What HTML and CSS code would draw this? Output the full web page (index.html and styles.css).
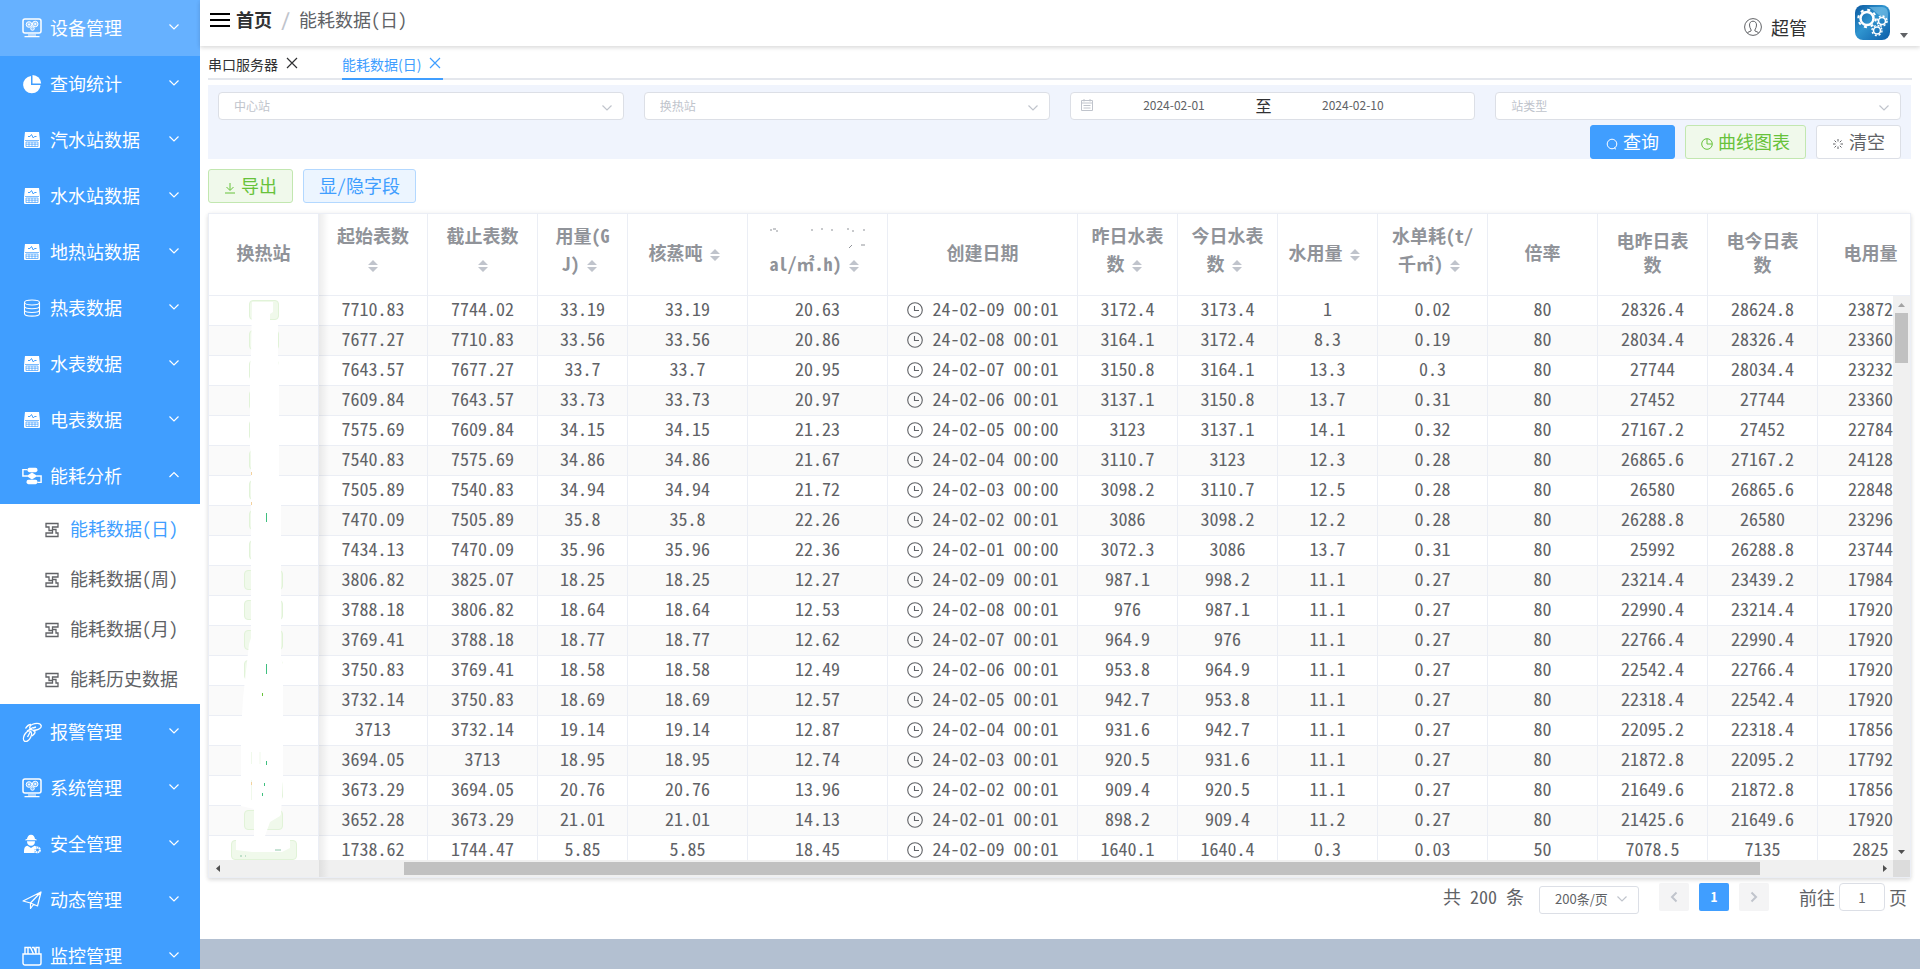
FILE: index.html
```html
<!DOCTYPE html>
<html lang="zh-CN">
<head>
<meta charset="utf-8">
<title>能耗数据(日)</title>
<link rel="stylesheet" href="styles.css">
</head>
<body>
<svg class="sprite" aria-hidden="true">
  <symbol id="i-monitor" viewBox="0 0 20 20"><rect x="1" y="1" width="18" height="14" rx="2" fill="none" stroke="currentColor" stroke-width="1.500"/><g fill="currentColor" fill-opacity=".35" stroke="currentColor"><circle cx="7" cy="6.500" r="2.800"/><circle cx="13.200" cy="6" r="2.800"/><circle cx="10.500" cy="10.500" r="1.800"/></g><circle cx="7" cy="6.500" r="1" fill="currentColor"/><circle cx="13.200" cy="6" r="1" fill="currentColor"/><path d="M6 16.500h8v1H6zM2.500 18h15v1.200h-15z" fill="currentColor"/></symbol>
  <symbol id="i-pie" viewBox="0 0 20 20"><path d="M9 2v9h9.500A8.700 8.700 0 1 1 9 2z" fill="currentColor"/><path d="M10.500 1a8.800 8.800 0 0 1 8.700 8.600h-8.700z" fill="currentColor"/></symbol>
  <symbol id="i-meter" viewBox="0 0 20 20"><path d="M3 2h14l1 9v6a1 1 0 0 1-1 1H3a1 1 0 0 1-1-1v-6z" fill="currentColor"/><path d="M6 6.500h2l1.500-2 1.800 3.500 1.200-1.500h2" fill="none" stroke="#409eff" stroke-width="1"/><path d="M3 10.500h14M4 12h12v4.500H4zM4 14.200h12M7 12v4.500M10 12v4.500M13 12v4.500" fill="none" stroke="#409eff" stroke-width=".7"/></symbol>
  <symbol id="i-db" viewBox="0 0 20 20"><g fill="none" stroke="currentColor" stroke-width="1.100"><ellipse cx="10" cy="4.500" rx="7.500" ry="2.500"/><path d="M2.500 4.500v11c0 3.500 15 3.500 15 0v-11M2.500 8.200c0 3.300 15 3.300 15 0M2.500 12c0 3.300 15 3.300 15 0"/></g></symbol>
  <symbol id="i-flow" viewBox="0 0 22 20"><g fill="currentColor"><rect x="6" y="1" width="11" height="4.800" rx="2"/><path d="M11 6.200l6 3.800-6 3.800L5 10z"/><rect x="5" y="14.200" width="12" height="4.800" rx="2"/></g><path d="M6 3H1v7h5M16 10h5v7h-4" fill="none" stroke="currentColor" stroke-width="1.600"/></symbol>
  <symbol id="i-zig" viewBox="0 0 14 16"><path d="M1 1.500h12v3.500H7.500v2.500H11V11h2v3.500H1V11h6.500V8.500H4V5H1z" fill="none" stroke="currentColor" stroke-width="1.300"/></symbol>
  <symbol id="i-alarm" viewBox="0 0 20 20"><g fill="none" stroke="currentColor" stroke-width="1.400"><ellipse cx="13.500" cy="4.800" rx="5.800" ry="3.300" transform="rotate(-12 13.500 4.800)"/><ellipse cx="5.500" cy="14.200" rx="5.800" ry="3.300" transform="rotate(-62 5.500 14.200)"/><path d="M3.500 6.500C5 4 7 2.500 9 2.500M5 9l6-3.500M8.500 9.500L5.500 15M11 9c2-.5 2.500 1 1.500 2.500L10 14M11 6l3-1"/></g></symbol>
  <symbol id="i-guard" viewBox="0 0 20 20"><g fill="currentColor"><path d="M3 6.300c0-.8 2-1.300 2-1.300C5.500 2.500 6.500.8 9 .8S12.500 2.500 13 5c0 0 2 .5 2 1.300z"/><path d="M5 7.200h8c0 2.800-1.500 4.600-4 4.600S5 10 5 7.200z"/><path d="M2 19c0-5 .5-6.500 3.500-7.300L9 14l3.500-2.300 2.500 1-2.800 3 .6 3.300z"/></g><circle cx="15.500" cy="16" r="2.400" fill="none" stroke="currentColor" stroke-width="2" stroke-dasharray="1.500 .385"/></symbol>
  <symbol id="i-plane" viewBox="0 0 20 20"><path d="M1 11L19 2l-3.500 14-7-3zM19 2L8.500 13v5.500l3-4" fill="none" stroke="currentColor" stroke-width="1.200" stroke-linejoin="round"/></symbol>
  <symbol id="i-box" viewBox="0 0 20 20"><g fill="none" stroke="currentColor" stroke-width="1.400"><path d="M1 8h18v9a2 2 0 0 1-2 2H3a2 2 0 0 1-2-2z"/><path d="M3 8V1.500h3V8M6.500 1.500h2L11.500 8M10 1.500h2L14 7M14 8V1.500h3V8"/></g></symbol>
  <symbol id="i-down" viewBox="0 0 12 8"><path d="M1.500 1.500L6 6l4.500-4.500" fill="none" stroke="currentColor" stroke-width="1.200"/></symbol>
  <symbol id="i-up" viewBox="0 0 12 8"><path d="M1.500 6L6 1.500 10.500 6" fill="none" stroke="currentColor" stroke-width="1.200"/></symbol>
  <symbol id="i-close" viewBox="0 0 12 12"><path d="M1 1l10 10M11 1L1 11" stroke="currentColor" stroke-width="1.200"/></symbol>
  <symbol id="i-clock" viewBox="0 0 16 16"><circle cx="8" cy="8" r="7.300" fill="none" stroke="currentColor" stroke-width="1.100"/><path d="M7.500 4v4.500H12" fill="none" stroke="currentColor" stroke-width="1.100"/></symbol>
  <symbol id="i-sort" viewBox="0 0 10 12"><path d="M5 0l5 5H0zM5 12l5-5H0z" fill="currentColor"/></symbol>
</svg>
<div class="app">
  <nav class="side">
    <button class="item on"><svg><use href="#i-monitor"/></svg><span>设备管理</span><svg class="arr"><use href="#i-down"/></svg></button>
    <button class="item"><svg><use href="#i-pie"/></svg><span>查询统计</span><svg class="arr"><use href="#i-down"/></svg></button>
    <button class="item"><svg><use href="#i-meter"/></svg><span>汽水站数据</span><svg class="arr"><use href="#i-down"/></svg></button>
    <button class="item"><svg><use href="#i-meter"/></svg><span>水水站数据</span><svg class="arr"><use href="#i-down"/></svg></button>
    <button class="item"><svg><use href="#i-meter"/></svg><span>地热站数据</span><svg class="arr"><use href="#i-down"/></svg></button>
    <button class="item"><svg><use href="#i-db"/></svg><span>热表数据</span><svg class="arr"><use href="#i-down"/></svg></button>
    <button class="item"><svg><use href="#i-meter"/></svg><span>水表数据</span><svg class="arr"><use href="#i-down"/></svg></button>
    <button class="item"><svg><use href="#i-meter"/></svg><span>电表数据</span><svg class="arr"><use href="#i-down"/></svg></button>
    <button class="item"><svg><use href="#i-flow"/></svg><span>能耗分析</span><svg class="arr"><use href="#i-up"/></svg></button>
    <div class="sub">
      <a class="on" href="#"><svg><use href="#i-zig"/></svg>能耗数据(日)</a>
      <a href="#"><svg><use href="#i-zig"/></svg>能耗数据(周)</a>
      <a href="#"><svg><use href="#i-zig"/></svg>能耗数据(月)</a>
      <a href="#"><svg><use href="#i-zig"/></svg>能耗历史数据</a>
    </div>
    <button class="item"><svg><use href="#i-alarm"/></svg><span>报警管理</span><svg class="arr"><use href="#i-down"/></svg></button>
    <button class="item"><svg><use href="#i-monitor"/></svg><span>系统管理</span><svg class="arr"><use href="#i-down"/></svg></button>
    <button class="item"><svg><use href="#i-guard"/></svg><span>安全管理</span><svg class="arr"><use href="#i-down"/></svg></button>
    <button class="item"><svg><use href="#i-plane"/></svg><span>动态管理</span><svg class="arr"><use href="#i-down"/></svg></button>
    <button class="item"><svg><use href="#i-box"/></svg><span>监控管理</span><svg class="arr"><use href="#i-down"/></svg></button>
  </nav>
  <div class="page">
    <header class="top">
      <button class="burger" aria-label="菜单"><i></i><i></i><i></i></button>
      <div class="crumb"><a href="#">首页</a><span class="sep">/</span><span>能耗数据(日)</span></div>
      <div class="user">
        <svg class="face" viewBox="0 0 18 18"><circle cx="9" cy="9" r="8.400"/><path d="M3.500 14.500l3.500-1.500c1-1-1.500-2.500-1.500-6C5.500 4.500 7 3.200 9 3.200s3.500 1.300 3.500 3.800c0 3.500-2.500 5-1.500 6l3.500 1.500"/></svg>
        <span>超管</span>
      </div>
      <button class="logo" aria-label="用户菜单">
        <svg class="gears" viewBox="0 0 35 35"><defs><linearGradient id="lg" x1="0" y1="0" x2="1" y2="1"><stop offset="0" stop-color="#0a58a0"/><stop offset=".45" stop-color="#2f94cf"/><stop offset="1" stop-color="#0b5ca8"/></linearGradient></defs><rect width="35" height="35" rx="8" fill="url(#lg)"/><path d="M14 2h13q6 0 6 7v9Q22 8 14 2z" fill="#8fd0f0" opacity=".5"/><g fill="none" stroke="#fff"><circle cx="12" cy="13.500" r="6.500" stroke-width="2.500"/><circle cx="12" cy="13.500" r="8.700" stroke-width="2" stroke-dasharray="3 3.830"/><circle cx="27" cy="16" r="3.500" stroke-width="1.600"/><circle cx="27" cy="16" r="5" stroke-width="1.400" stroke-dasharray="2 1.930"/><circle cx="22" cy="25.500" r="3.500" stroke-width="1.600"/><circle cx="22" cy="25.500" r="5" stroke-width="1.400" stroke-dasharray="2 1.930"/></g></svg>
        <svg class="caret" viewBox="0 0 8 5"><path d="M0 0h8L4 5z"/></svg>
      </button>
    </header>
    <div class="tabs">
      <div class="tab"><a href="#">串口服务器</a><button aria-label="关闭"><svg><use href="#i-close"/></svg></button></div>
      <div class="tab on"><a href="#">能耗数据(日)</a><button aria-label="关闭"><svg><use href="#i-close"/></svg></button></div>
    </div>
    <main class="main">
      <form class="search">
        <div class="fields">
          <div class="sel"><select aria-label="中心站"><option>中心站</option></select><svg><use href="#i-down"/></svg></div>
          <div class="sel"><select aria-label="换热站"><option>换热站</option></select><svg><use href="#i-down"/></svg></div>
          <div class="range">
            <svg viewBox="0 0 12 12"><path d="M.5 1.500h11v10H.5zM.5 4h11M3 0v2.500M9 0v2.500M2.500 6.500h7M2.500 9h7" fill="none" stroke="currentColor"/></svg>
            <input type="text" value="2024-02-01" aria-label="开始日期"><span>至</span><input type="text" value="2024-02-10" aria-label="结束日期">
          </div>
          <div class="sel"><select aria-label="站类型"><option>站类型</option></select><svg><use href="#i-down"/></svg></div>
        </div>
        <div class="acts">
          <button type="button" class="btn primary"><svg viewBox="0 0 12 12"><circle cx="6" cy="6" r="4.800"/><path d="M8 9.500l2 1.800"/></svg>查询</button>
          <button type="button" class="btn green"><svg viewBox="0 0 12 12"><circle cx="6" cy="6" r="5.300"/><path d="M6 1v5h5"/></svg>曲线图表</button>
          <button type="button" class="btn"><svg viewBox="0 0 12 12"><path d="M6 1v2.500M6 8.500V11M1 6h2.500M8.500 6H11M2.500 2.500l1.700 1.700M7.800 7.800l1.700 1.700M9.500 2.500L7.800 4.200M4.200 7.800L2.500 9.500"/></svg>清空</button>
        </div>
      </form>
      <div class="tools">
        <button class="btn green"><svg viewBox="0 0 12 12"><path d="M6 1v7M2.500 5L6 8.500 9.500 5M1 11h10"/></svg>导出</button>
        <button class="btn blue">显/隐字段</button>
      </div>
      <div class="grid">
        <div class="head">
          <table><colgroup><col class="w110"><col class="w109"><col class="w110"><col class="w90"><col class="w120"><col class="w140"><col class="w190"><col class="w100"><col class="w100"><col class="w100"><col class="w110"><col class="w110"><col class="w110"><col class="w110"><col class="w106"></colgroup>
          <thead><tr>
            <th>换热站</th>
            <th class="s two">起始表数<br><svg><use href="#i-sort"/></svg></th>
            <th class="s two">截止表数<br><svg><use href="#i-sort"/></svg></th>
            <th class="s two">用量(G<br>J)<svg><use href="#i-sort"/></svg></th>
            <th class="s">核蒸吨<svg><use href="#i-sort"/></svg></th>
            <th class="s two"><svg class="trace" viewBox="0 0 96 28"><path d="M0 9h2M3 8h3M6 10h2M41 9h2M51 8h2M61 9h2M77 8h2M82 10h2M93 9h2M79 27l3-3M91 24h4" stroke="#909399"/></svg><br>al/㎡.h)<svg><use href="#i-sort"/></svg></th>
            <th>创建日期</th>
            <th class="s two">昨日水表<br>数<svg><use href="#i-sort"/></svg></th>
            <th class="s two">今日水表<br>数<svg><use href="#i-sort"/></svg></th>
            <th class="s">水用量<svg><use href="#i-sort"/></svg></th>
            <th class="s two">水单耗(t/<br>千㎡)<svg><use href="#i-sort"/></svg></th>
            <th>倍率</th>
            <th>电昨日表<br>数</th>
            <th>电今日表<br>数</th>
            <th>电用量</th>
          </tr></thead></table>
        </div>
        <div class="mid">
          <div class="body">
            <table><colgroup><col class="w110"><col class="w109"><col class="w110"><col class="w90"><col class="w120"><col class="w140"><col class="w190"><col class="w100"><col class="w100"><col class="w100"><col class="w110"><col class="w110"><col class="w110"><col class="w110"><col class="w106"></colgroup>
            <tbody>
<tr><td><i class="tag s"></i></td><td>7710.83</td><td>7744.02</td><td>33.19</td><td>33.19</td><td>20.63</td><td><svg><use href="#i-clock"/></svg>24-02-09 00:01</td><td>3172.4</td><td>3173.4</td><td>1</td><td>0.02</td><td>80</td><td>28326.4</td><td>28624.8</td><td>23872</td></tr>
<tr><td><i class="tag s"></i></td><td>7677.27</td><td>7710.83</td><td>33.56</td><td>33.56</td><td>20.86</td><td><svg><use href="#i-clock"/></svg>24-02-08 00:01</td><td>3164.1</td><td>3172.4</td><td>8.3</td><td>0.19</td><td>80</td><td>28034.4</td><td>28326.4</td><td>23360</td></tr>
<tr><td><i class="tag s"></i></td><td>7643.57</td><td>7677.27</td><td>33.7</td><td>33.7</td><td>20.95</td><td><svg><use href="#i-clock"/></svg>24-02-07 00:01</td><td>3150.8</td><td>3164.1</td><td>13.3</td><td>0.3</td><td>80</td><td>27744</td><td>28034.4</td><td>23232</td></tr>
<tr><td><i class="tag s"></i></td><td>7609.84</td><td>7643.57</td><td>33.73</td><td>33.73</td><td>20.97</td><td><svg><use href="#i-clock"/></svg>24-02-06 00:01</td><td>3137.1</td><td>3150.8</td><td>13.7</td><td>0.31</td><td>80</td><td>27452</td><td>27744</td><td>23360</td></tr>
<tr><td><i class="tag s"></i></td><td>7575.69</td><td>7609.84</td><td>34.15</td><td>34.15</td><td>21.23</td><td><svg><use href="#i-clock"/></svg>24-02-05 00:00</td><td>3123</td><td>3137.1</td><td>14.1</td><td>0.32</td><td>80</td><td>27167.2</td><td>27452</td><td>22784</td></tr>
<tr><td><i class="tag s"></i></td><td>7540.83</td><td>7575.69</td><td>34.86</td><td>34.86</td><td>21.67</td><td><svg><use href="#i-clock"/></svg>24-02-04 00:00</td><td>3110.7</td><td>3123</td><td>12.3</td><td>0.28</td><td>80</td><td>26865.6</td><td>27167.2</td><td>24128</td></tr>
<tr><td><i class="tag s"></i></td><td>7505.89</td><td>7540.83</td><td>34.94</td><td>34.94</td><td>21.72</td><td><svg><use href="#i-clock"/></svg>24-02-03 00:00</td><td>3098.2</td><td>3110.7</td><td>12.5</td><td>0.28</td><td>80</td><td>26580</td><td>26865.6</td><td>22848</td></tr>
<tr><td><i class="tag s"></i></td><td>7470.09</td><td>7505.89</td><td>35.8</td><td>35.8</td><td>22.26</td><td><svg><use href="#i-clock"/></svg>24-02-02 00:01</td><td>3086</td><td>3098.2</td><td>12.2</td><td>0.28</td><td>80</td><td>26288.8</td><td>26580</td><td>23296</td></tr>
<tr><td><i class="tag s"></i></td><td>7434.13</td><td>7470.09</td><td>35.96</td><td>35.96</td><td>22.36</td><td><svg><use href="#i-clock"/></svg>24-02-01 00:00</td><td>3072.3</td><td>3086</td><td>13.7</td><td>0.31</td><td>80</td><td>25992</td><td>26288.8</td><td>23744</td></tr>
<tr><td><i class="tag m"></i></td><td>3806.82</td><td>3825.07</td><td>18.25</td><td>18.25</td><td>12.27</td><td><svg><use href="#i-clock"/></svg>24-02-09 00:01</td><td>987.1</td><td>998.2</td><td>11.1</td><td>0.27</td><td>80</td><td>23214.4</td><td>23439.2</td><td>17984</td></tr>
<tr><td><i class="tag m"></i></td><td>3788.18</td><td>3806.82</td><td>18.64</td><td>18.64</td><td>12.53</td><td><svg><use href="#i-clock"/></svg>24-02-08 00:01</td><td>976</td><td>987.1</td><td>11.1</td><td>0.27</td><td>80</td><td>22990.4</td><td>23214.4</td><td>17920</td></tr>
<tr><td><i class="tag m"></i></td><td>3769.41</td><td>3788.18</td><td>18.77</td><td>18.77</td><td>12.62</td><td><svg><use href="#i-clock"/></svg>24-02-07 00:01</td><td>964.9</td><td>976</td><td>11.1</td><td>0.27</td><td>80</td><td>22766.4</td><td>22990.4</td><td>17920</td></tr>
<tr><td><i class="tag m"></i></td><td>3750.83</td><td>3769.41</td><td>18.58</td><td>18.58</td><td>12.49</td><td><svg><use href="#i-clock"/></svg>24-02-06 00:01</td><td>953.8</td><td>964.9</td><td>11.1</td><td>0.27</td><td>80</td><td>22542.4</td><td>22766.4</td><td>17920</td></tr>
<tr><td><i class="tag m"></i></td><td>3732.14</td><td>3750.83</td><td>18.69</td><td>18.69</td><td>12.57</td><td><svg><use href="#i-clock"/></svg>24-02-05 00:01</td><td>942.7</td><td>953.8</td><td>11.1</td><td>0.27</td><td>80</td><td>22318.4</td><td>22542.4</td><td>17920</td></tr>
<tr><td><i class="tag m"></i></td><td>3713</td><td>3732.14</td><td>19.14</td><td>19.14</td><td>12.87</td><td><svg><use href="#i-clock"/></svg>24-02-04 00:01</td><td>931.6</td><td>942.7</td><td>11.1</td><td>0.27</td><td>80</td><td>22095.2</td><td>22318.4</td><td>17856</td></tr>
<tr><td><i class="tag m"></i></td><td>3694.05</td><td>3713</td><td>18.95</td><td>18.95</td><td>12.74</td><td><svg><use href="#i-clock"/></svg>24-02-03 00:01</td><td>920.5</td><td>931.6</td><td>11.1</td><td>0.27</td><td>80</td><td>21872.8</td><td>22095.2</td><td>17792</td></tr>
<tr><td><i class="tag m"></i></td><td>3673.29</td><td>3694.05</td><td>20.76</td><td>20.76</td><td>13.96</td><td><svg><use href="#i-clock"/></svg>24-02-02 00:01</td><td>909.4</td><td>920.5</td><td>11.1</td><td>0.27</td><td>80</td><td>21649.6</td><td>21872.8</td><td>17856</td></tr>
<tr><td><i class="tag m"></i></td><td>3652.28</td><td>3673.29</td><td>21.01</td><td>21.01</td><td>14.13</td><td><svg><use href="#i-clock"/></svg>24-02-01 00:01</td><td>898.2</td><td>909.4</td><td>11.2</td><td>0.27</td><td>80</td><td>21425.6</td><td>21649.6</td><td>17920</td></tr>
<tr><td><i class="tag l"></i></td><td>1738.62</td><td>1744.47</td><td>5.85</td><td>5.85</td><td>18.45</td><td><svg><use href="#i-clock"/></svg>24-02-09 00:01</td><td>1640.1</td><td>1640.4</td><td>0.3</td><td>0.03</td><td>50</td><td>7078.5</td><td>7135</td><td>2825</td></tr>
            </tbody></table>
            <svg class="smear" viewBox="0 0 110 564"><path fill="#fff" d="M43 6h21v10l-3 2v6h8v40l1 5v115h2v179l2 5v115l-2 35-1 2-10 6-5 14h25v12l-8 4H43l-16-2v-12h18v-29l-13-3v-73l2-35 6-54 2-6V160l-1-10V70l1-10z"/><g stroke-width="1"><path d="M57.500 217v9M57.500 368v10M57.500 465v4M55.500 487v3M53.500 497v3" stroke="#3fbf7f"/><path d="M53.500 397v3" stroke="#67c23a"/><path d="M42.500 456v12M51 456v12M42.500 484v20" stroke="#f0f9eb"/><path d="M66 554h6M31 560h2M36 560h1" stroke="#8fc7a8"/><path d="M42.500 176v3M42.500 206v3M42.500 486v3" stroke="#f3d19e"/></g></svg>
          </div>
          <div class="vbar"><svg viewBox="0 0 17 17"><path d="M5 11h7L8.500 7z" fill="#a3a3a3"/></svg><div class="vtrack"><i></i></div><svg viewBox="0 0 17 17"><path d="M5 7h7l-3.500 4z" fill="#505050"/></svg></div>
        </div>
        <div class="hbar"><svg viewBox="0 0 17 17"><path d="M11 5v7L7 8.500z" fill="#505050"/></svg><div class="htrack"><b></b><i></i><b></b></div><svg viewBox="0 0 17 17"><path d="M7 5v7l4-3.500z" fill="#505050"/></svg><div class="corner"></div></div>
        <div class="fixshade"></div>
      </div>
      <div class="pager">
        <span class="total">共 200 条</span>
        <div class="sel size"><select aria-label="每页条数"><option>200条/页</option></select><svg><use href="#i-down"/></svg></div>
        <button class="pg" aria-label="上一页"><svg viewBox="0 0 8 12"><path d="M6.500 1.500L2 6l4.500 4.500"/></svg></button>
        <button class="pg on">1</button>
        <button class="pg" aria-label="下一页"><svg viewBox="0 0 8 12"><path d="M1.500 1.500L6 6l-4.500 4.500"/></svg></button>
        <label class="jump">前往<input type="text" value="1">页</label>
      </div>
    </main>
    <footer class="foot"></footer>
  </div>
</div>
</body>
</html>
```
FILE: styles.css
```css
* { box-sizing: border-box; }
body {
  margin: 0;
  font-family: "Noto Sans CJK SC", sans-serif;
  font-size: 18px;
  font-feature-settings: "hwid";
  color: #606266;
  background: #fff;
}
button, input, select { font: inherit; font-feature-settings: inherit; color: inherit; margin: 0; }
button { cursor: pointer; }
a { color: inherit; text-decoration: none; }
.sprite { display: none; }
.app { display: flex; height: 100vh; overflow: hidden; }

.side { width: 200px; flex: none; background: #409eff; overflow: hidden; }
.item {
  display: flex; align-items: center; gap: 8px;
  width: 100%; height: 56px; padding: 0 20px 0 22px;
  border: 0; background: none; color: #fff; text-align: left;
}
.item.on { background: #66b1ff; }
.item svg { width: 20px; height: 20px; }
.item span { flex: 1; padding-bottom: 2px; }
.item .arr { width: 12px; height: 8px; margin-bottom: 2px; }
.sub { background: #fff; }
.sub a { display: flex; align-items: center; gap: 11px; height: 50px; padding: 0 0 2px 45px; white-space: nowrap; }
.sub svg { width: 14px; height: 16px; color: #606266; margin-top: 3px; }
.sub .on { color: #409eff; }

.page { flex: 1; min-width: 0; display: flex; flex-direction: column; }
.top {
  display: flex; align-items: center; height: 46px; flex: none; padding: 0 10px;
  box-shadow: 0 2px 4px rgba(0,0,0,.12), 0 0 6px rgba(0,0,0,.04);
}
.burger { display: flex; flex-direction: column; gap: 4px; width: 20px; padding: 0; margin-bottom: 6px; border: 0; background: none; }
.burger i { height: 2px; width: 20px; background: #000; }
.crumb { display: flex; margin: 0 auto 9px 6px; }
.crumb a { font-weight: 700; color: #303133; }
.sep { margin: 0 9px; color: #c0c4cc; font-weight: 700; }
.user { display: flex; align-items: center; gap: 9px; margin-right: 48px; padding-top: 7px; color: #303133; }
.face { width: 18px; height: 18px; fill: none; stroke: #606266; margin-top: 1px; }
.logo { display: flex; align-items: flex-end; gap: 10px; padding: 0 0 1px; border: 0; background: none; margin-right: 2px; }
.gears { width: 35px; height: 35px; }
.caret { width: 8px; height: 5px; fill: #606266; margin-bottom: 2px; }

.tabs { display: flex; gap: 42px; flex: none; height: 34px; margin: 0 8px; border-bottom: 2px solid #e4e7ed; font-size: 14px; font-feature-settings: normal; color: #303133; }
.tab { display: flex; align-items: center; gap: 8px; height: 34px; padding: 4px 2px 0 0; border-bottom: 2px solid transparent; }
.tab.on { color: #409eff; border-color: #409eff; }
.tab button { display: flex; padding: 0 0 2px; border: 0; background: none; }
.tab svg { width: 12px; height: 12px; }

.main { flex: 1; min-height: 0; display: flex; flex-direction: column; padding: 5px 9px 0 8px; }
.search { flex: none; background: #f0f4fd; padding: 7px 10px 0; }
.fields { display: grid; grid-template-columns: repeat(4, 1fr); gap: 20px; font-size: 12px; font-feature-settings: normal; }
.sel { position: relative; }
.sel select {
  appearance: none; width: 100%; height: 28px; padding: 0 15px 2px;
  border: 1px solid #dcdfe6; border-radius: 4px; background: #fff; color: #c0c4cc; font-size: 12px;
}
.sel svg { position: absolute; right: 11px; top: 12px; width: 12px; height: 8px; color: #c0c4cc; pointer-events: none; }
.range { display: flex; align-items: center; height: 28px; padding: 0 10px 3px; border: 1px solid #dcdfe6; border-radius: 4px; background: #fff; }
.range svg { width: 12px; height: 12px; color: #c0c4cc; }
.range input { flex: 1; min-width: 0; padding: 0; border: 0; text-align: center; background: none; }
.range input:last-child { margin-right: 30px; }
.range span { font-size: 16px; color: #303133; }
.acts { display: flex; justify-content: flex-end; gap: 10px; margin-top: 5px; }
.tools { display: flex; gap: 10px; margin: 10px 0; flex: none; }
.btn {
  display: flex; align-items: center; gap: 5px; height: 34px; padding: 0 15px 3px;
  border: 1px solid #dcdfe6; border-radius: 3px; background: #fff; line-height: 28px;
}
.btn svg { width: 12px; height: 12px; fill: none; stroke: currentColor; stroke-width: 1; margin-top: 6px; }
.btn.primary { color: #fff; background: #409eff; border-color: #409eff; }
.btn.green { color: #67c23a; background: #f0f9eb; border-color: #c2e7b0; }
.btn.blue { color: #409eff; background: #ecf5ff; border-color: #b3d8ff; }

.grid {
  position: relative; flex: 1; min-height: 0; display: flex; flex-direction: column;
  border: 1px solid #ebeef5;
  box-shadow: 0 2px 4px rgba(0,0,0,.12), 0 0 6px rgba(0,0,0,.04);
}
.grid table { table-layout: fixed; width: 1715px; border-collapse: separate; border-spacing: 0; }
.w90 { width: 90px; } .w100 { width: 100px; } .w106 { width: 106px; } .w109 { width: 109px; } .w110 { width: 110px; }
.w120 { width: 120px; } .w140 { width: 140px; } .w190 { width: 190px; }
.grid th, .grid td { padding: 0; text-align: center; white-space: nowrap; border-right: 1px solid #ebeef5; border-bottom: 1px solid #ebeef5; }
.head { overflow: hidden; flex: none; }
.grid th { height: 82px; padding-bottom: 5px; color: #909399; line-height: 24px; }
.grid th.s { line-height: 28px; }
.grid th.two { padding-bottom: 12px; }
.grid th svg { width: 10px; height: 12px; margin: 0 7px; color: #c0c4cc; vertical-align: -1px; }
.grid th .trace { width: 96px; height: 28px; margin: 0; vertical-align: top; }
.mid { flex: 1; min-height: 0; display: flex; }
.body { position: relative; flex: 1; min-width: 0; overflow: hidden; }
.grid td { height: 30px; padding-bottom: 5px; line-height: 22px; }
.grid td:first-child { padding-bottom: 1px; }
.body tr:nth-child(even) { background: #fafafa; }
.body td svg { width: 16px; height: 16px; margin-right: 10px; vertical-align: -2px; }
.tag { display: block; height: 20px; margin: 0 auto; border: 1px solid #e1f3d8; border-radius: 4px; background: #f0f9eb; }
.tag.s { width: 30px; } .tag.m { width: 39px; } .tag.l { width: 66px; }
.smear { position: absolute; left: 0; top: 0; width: 110px; height: 564px; }
.vbar { width: 17px; flex: none; display: flex; flex-direction: column; background: #f0f0f0; }
.vbar svg, .hbar svg { width: 17px; height: 17px; flex: none; }
.vtrack { flex: 1; padding: 0 2px; }
.vtrack i { display: block; height: 50px; background: #c1c1c1; }
.hbar { display: flex; height: 17px; flex: none; background: #f0f0f0; }
.htrack { flex: 1; display: flex; padding: 2px 0; }
.htrack b:first-child { flex: 178; }
.htrack i { flex: 1357; background: #c1c1c1; }
.htrack b { flex: 116; }
.corner { width: 17px; background: #dcdcdc; }
.fixshade { position: absolute; left: 110px; top: 0; bottom: 0; width: 10px; background: linear-gradient(to right, rgba(0,0,0,.07), rgba(0,0,0,0)); }

.pager { display: flex; align-items: center; flex: none; height: 61px; padding: 0 4px 24px 0; justify-content: flex-end; }
.total { padding-bottom: 1px; }
.size { width: 100px; margin: 4px 20px 0 15px; }
.size select { color: #606266; font-size: 13px; font-feature-settings: normal; border-radius: 3px; }
.pg { display: flex; align-items: center; justify-content: center; width: 30px; height: 28px; margin-right: 10px; padding: 0; border: 0; border-radius: 2px; background: #f4f4f5; font-size: 13px; font-weight: 700; color: #c0c4cc; }
.pg svg { width: 8px; height: 12px; fill: none; stroke: currentColor; stroke-width: 2; }
.pg.on { background: #409eff; color: #fff; }
.jump { display: flex; align-items: center; gap: 4px; margin-left: 20px; }
.jump input { width: 46px; height: 28px; padding: 0; border: 1px solid #dcdfe6; border-radius: 4px; text-align: center; font-size: 14px; }
.foot { height: 30px; flex: none; background: #b3c0d1; }
```
